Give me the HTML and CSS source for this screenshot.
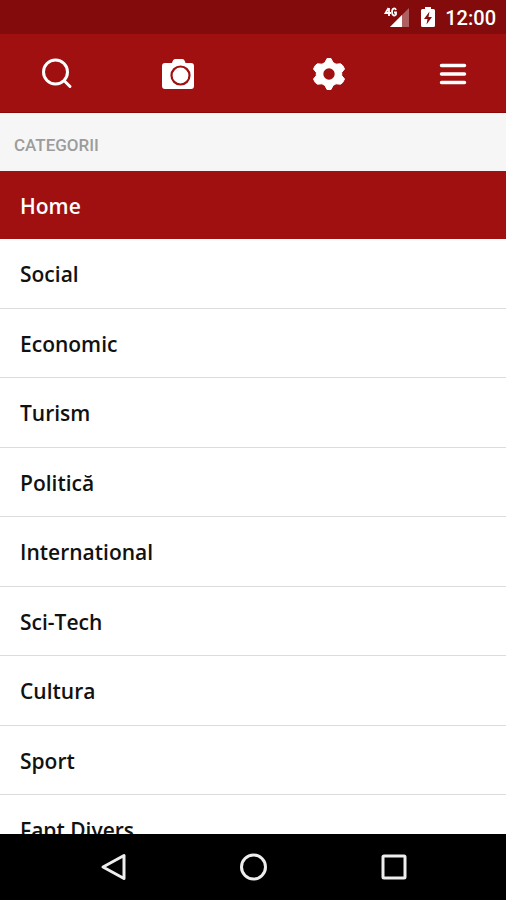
FILE: index.html
```html
<!DOCTYPE html>
<html lang="ro">
<head>
    <meta charset="UTF-8">
    <meta name="viewport" content="width=device-width, initial-scale=1.0">
    <title>Categorii</title>
    <link rel="stylesheet" href="styles.css">
</head>
<body>
    <div class="status-bar">
        <svg class="status-signal" viewBox="0 0 26 22" role="img" aria-label="4G">
            <path d="M7 20L26 1v19z" fill="#fff" fill-opacity="0.35"/>
            <path d="M7 20L19 8v12z" fill="#fff"/>
            <path d="M5.500 1L2.500 6H8M6 1v8M13 3c-1-2.500-4-2-4 2s3 4 4 2.500V5.500h-2" fill="none" stroke="#fff" stroke-width="1.800"/>
        </svg>
        <svg class="status-battery" viewBox="0 0 14 22" aria-hidden="true">
            <path d="M4 0h6v2h2.500q1.500 0 1.500 1.500v15q0 1.500-1.500 1.500h-11Q0 20 0 18.500v-15Q0 2 1.500 2H4z" fill="#fff"/>
            <path d="M8.500 4.500L3 12h3.500l-1 5.500L11 10H7.500z" fill="#870b0b"/>
        </svg>
        <span class="status-time">12:00</span>
    </div>

    <header class="toolbar">
        <button type="button" class="toolbar-btn" aria-label="Căutare">
            <svg viewBox="0 0 36 36" fill="none" stroke="#fff" stroke-width="3" stroke-linecap="round">
                <circle cx="16.500" cy="16" r="12"/>
                <path d="M25.500 25l5.500 5.500"/>
            </svg>
        </button>
        <button type="button" class="toolbar-btn" aria-label="Foto">
            <svg viewBox="0 0 36 36">
                <path d="M12.500 5.500Q13.200 3 15 3h7.500q1.800 0 2.500 2.500L25.600 7H31q3 0 3 3v20q0 3-3 3H5q-3 0-3-3V10q0-3 3-3h6.900z" fill="#fff"/>
                <circle cx="20.500" cy="19.500" r="9" fill="none" stroke="#a01010" stroke-width="2.200"/>
            </svg>
        </button>
        <button type="button" class="toolbar-btn" aria-label="Setări">
            <svg viewBox="0 0 36 36">
                <path d="M16 2.500h4l2 4 3 1.700 4.500-.4 2.200 1.700 1.800 3.500-2.800 3.500v3l2.800 3.500-1.800 3.500-2.200 1.700-4.500-.4-3 1.700-2 4h-4l-2-4-3-1.700-4.500.4-2.200-1.700-1.800-3.500 2.800-3.500v-3l-2.800-3.500 1.800-3.500 2.200-1.700 4.500.4 3-1.700z" fill="#fff" stroke="#fff" stroke-linejoin="round"/>
                <circle cx="18" cy="18" r="5.700" fill="#a01010"/>
            </svg>
        </button>
        <button type="button" class="toolbar-btn" aria-label="Meniu">
            <svg viewBox="0 0 36 36" stroke="#fff" stroke-width="3.500" stroke-linecap="round">
                <path d="M6.500 9.500h23M6.500 18h23M6.500 26.500h23"/>
            </svg>
        </button>
    </header>

    <main class="categories">
        <h1 class="categories-title">CATEGORII</h1>
        <ul class="category-list">
            <li><a href="#" class="category-link active" aria-current="page">Home</a></li>
            <li><a href="#" class="category-link">Social</a></li>
            <li><a href="#" class="category-link">Economic</a></li>
            <li><a href="#" class="category-link">Turism</a></li>
            <li><a href="#" class="category-link">Politică</a></li>
            <li><a href="#" class="category-link">International</a></li>
            <li><a href="#" class="category-link">Sci-Tech</a></li>
            <li><a href="#" class="category-link">Cultura</a></li>
            <li><a href="#" class="category-link">Sport</a></li>
            <li><a href="#" class="category-link">Fapt Divers</a></li>
        </ul>
    </main>

    <nav class="system-nav" aria-label="Sistem">
        <button type="button" class="system-btn" aria-label="Înapoi">
            <svg viewBox="0 0 30 30"><path d="M26 3.500v23L5 15z"/></svg>
        </button>
        <button type="button" class="system-btn" aria-label="Acasă">
            <svg viewBox="0 0 30 30"><circle cx="15.500" cy="15" r="12"/></svg>
        </button>
        <button type="button" class="system-btn" aria-label="Recente">
            <svg viewBox="0 0 30 30"><rect x="5" y="4" width="22" height="22" rx="1"/></svg>
        </button>
    </nav>
</body>
</html>
```

FILE: styles.css
```css
* {
    margin: 0;
    padding: 0;
    box-sizing: border-box;
}

body {
    font-family: "Open Sans", "Noto Sans", sans-serif;
    background: #fff;
    color: #111;
    height: 100vh;
    display: flex;
    flex-direction: column;
    overflow: hidden;
}

button {
    background: none;
    border: none;
    cursor: pointer;
}

svg {
    display: block;
}

/* Status bar */
.status-bar {
    display: flex;
    align-items: center;
    justify-content: flex-end;
    flex-shrink: 0;
    padding: 6px 10px 4px 0;
    background: #830b0b;
    color: #fff;
}

.status-signal {
    width: 26px;
    height: 22px;
    margin-right: 12px;
}

.status-battery {
    width: 14px;
    height: 22px;
    margin-right: 10px;
}

.status-time {
    font-family: Roboto, sans-serif;
    font-size: 20px;
    font-weight: 500;
    line-height: 24px;
}

/* Toolbar */
.toolbar {
    display: grid;
    grid-template-columns: 57fr 64fr 87fr 37fr;
    flex-shrink: 0;
    padding: 21px 16px 19px 0;
    background: #a01010;
    border-bottom: 1px solid #8a0808;
}

.toolbar-btn {
    display: flex;
    justify-content: center;
}

.toolbar-btn svg {
    width: 36px;
    height: 38px;
}

/* Categories */
.categories {
    flex: 1;
    min-height: 0;
    overflow: hidden;
}

.categories-title {
    padding: 22px 14px 16px;
    background: #f6f6f6;
    color: #9c9c9c;
    font-family: Roboto, sans-serif;
    font-size: 17px;
    font-weight: 500;
    line-height: 20px;
}

.category-list {
    list-style: none;
}

.category-link {
    display: block;
    padding: 21px 20px 18px;
    border-bottom: 1px solid #dcdcdc;
    color: inherit;
    font-size: 21px;
    font-weight: 600;
    line-height: 29px;
    text-decoration: none;
}

.category-list li:nth-child(even) .category-link {
    padding-bottom: 19px;
}

.category-link.active {
    border-bottom: none;
    background: #a01010;
    color: #fff;
}

/* Android buttons */
.system-nav {
    display: flex;
    justify-content: center;
    gap: 110px;
    flex-shrink: 0;
    padding: 18px 0;
    background: #000;
}

.system-btn svg {
    width: 30px;
    height: 30px;
    fill: none;
    stroke: #eee;
    stroke-width: 3;
    stroke-linejoin: round;
}
```
